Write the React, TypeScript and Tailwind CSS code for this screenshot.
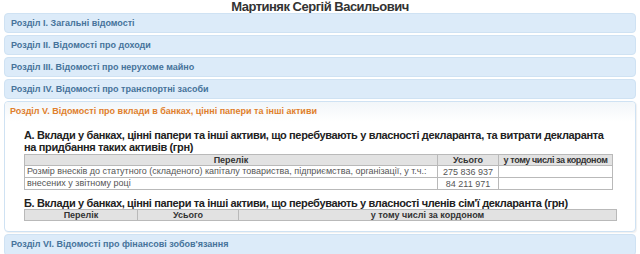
import React from 'react';

const closed = [
	'Розділ І. Загальні відомості',
	'Розділ ІІ. Відомості про доходи',
	'Розділ ІІІ. Відомості про нерухоме майно',
	'Розділ IV. Відомості про транспортні засоби',
];

const PanelHeader = ({ title }: { title: string }) => (
	<div className="h-[20px] rounded-[4px] border border-[#cfe2f3] bg-[#dcebf9] px-[6px] text-[9px] font-bold leading-[18px] text-[#46739b]">
		{title}
	</div>
);

const th = 'border border-[#b9b9b9] bg-[#e2e2e2] font-bold text-center leading-[10px] px-[2px] text-[#333] whitespace-nowrap';
const td = 'border border-[#b9b9b9] leading-[10px] px-[2px] text-[#555] whitespace-nowrap';

const App = () => {
	return (
		<div className="w-[640px] h-[254px] overflow-hidden bg-white px-[4px] font-['Liberation_Sans',Arial,sans-serif]">
			<h1 className="h-[13px] pt-[1px] text-center text-[13px] font-bold leading-[12px] tracking-[-0.5px] text-[#333]">
				Мартиняк Сергій Васильович
			</h1>
			<div className="flex flex-col gap-[2px]">
				{closed.map((t) => (
					<PanelHeader key={t} title={t} />
				))}
				<div className="h-[131px] rounded-[4px] border border-[#cfe2f3] bg-white shadow-[1px_1px_1px_rgba(0,0,0,0.06)]">
					<div className="h-[20px] rounded-t-[4px] bg-gradient-to-b from-[#f2f6f9] to-white px-[5px] text-[9px] font-bold leading-[19px] text-[#e07f2c]">
						Розділ V. Відомості про вклади в банках, цінні папери та інші активи
					</div>
					<div className="pl-[19px] pt-[7px]">
						<h3 className="w-[592px] text-[11px] font-bold leading-[12px] tracking-[-0.35px] text-[#222]">
							А. Вклади у банках, цінні папери та інші активи, що перебувають у власності декларанта, та витрати декларанта на придбання таких активів (грн)
						</h3>
						<table className="mt-[1px] w-[589px] table-fixed border-collapse text-[9px]">
							<colgroup>
								<col className="w-[413px]" />
								<col className="w-[61px]" />
								<col />
							</colgroup>
							<thead>
								<tr>
									<th className={th}>Перелік</th>
									<th className={th}>Усього</th>
									<th className={`${th} tracking-[-0.4px]`}>у тому числі за кордоном</th>
								</tr>
							</thead>
							<tbody>
								<tr>
									<td className={`${td} leading-[11px]`}>Розмір внесків до статутного (складеного) капіталу товариства, підприємства, організації, у т.ч.:</td>
									<td className={`${td} text-center`}>275 836 937</td>
									<td className={td}></td>
								</tr>
								<tr>
									<td className={`${td} leading-[11px]`}>внесених у звітному році</td>
									<td className={`${td} text-center`}>84 211 971</td>
									<td className={td}></td>
								</tr>
							</tbody>
						</table>
						<h3 className="mt-[7px] w-[600px] text-[11px] font-bold leading-[12px] tracking-[-0.35px] text-[#222]">
							Б. Вклади у банках, цінні папери та інші активи, що перебувають у власності членів сім'ї декларанта (грн)
						</h3>
						<table className="w-[593px] table-fixed border-collapse text-[9px]">
							<colgroup>
								<col className="w-[113px]" />
								<col className="w-[101px]" />
								<col />
							</colgroup>
							<thead>
								<tr>
									<th className={th}>Перелік</th>
									<th className={th}>Усього</th>
									<th className={th}>у тому числі за кордоном</th>
								</tr>
							</thead>
						</table>
					</div>
				</div>
				<div className="h-[22px] rounded-[4px] border border-[#cfe2f3] bg-[#dcebf9] px-[6px] text-[9px] font-bold leading-[18px] text-[#46739b]">
					Розділ VI. Відомості про фінансові зобов'язання
				</div>
			</div>
		</div>
	);
};

export default App;
